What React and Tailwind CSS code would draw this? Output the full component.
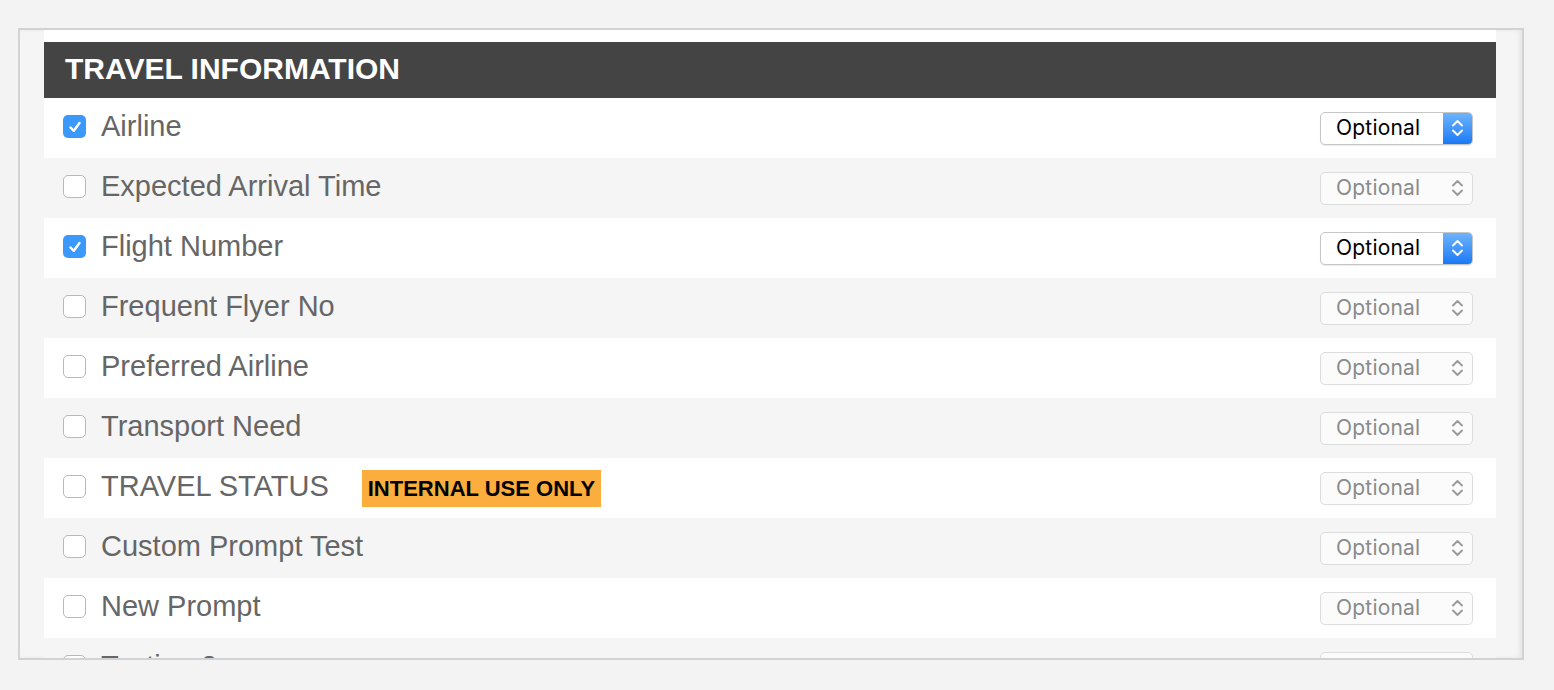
import React from "react";

const rows = [
  { label: "Airline", checked: true },
  { label: "Expected Arrival Time", checked: false },
  { label: "Flight Number", checked: true },
  { label: "Frequent Flyer No", checked: false },
  { label: "Preferred Airline", checked: false },
  { label: "Transport Need", checked: false },
  { label: "TRAVEL STATUS", checked: false, badge: "INTERNAL USE ONLY" },
  { label: "Custom Prompt Test", checked: false },
  { label: "New Prompt", checked: false },
  { label: "Testing 2", checked: false },
];

const Chevrons = ({ color }) => (
  <svg width="13" height="22" viewBox="0 0 13 22" fill="none" stroke={color} strokeWidth="1.9" strokeLinecap="round" strokeLinejoin="round">
    <path d="M2 8.5 L6.5 4 L11 8.5" />
    <path d="M2 13.5 L6.5 18 L11 13.5" />
  </svg>
);

const Checkbox = ({ checked }) =>
  checked ? (
    <div className="w-[23px] h-[23px] rounded-[5px] bg-[#3b99fc] flex items-center justify-center shrink-0">
      <svg width="16" height="16" viewBox="0 0 16 16" fill="none" stroke="white" strokeWidth="2.4" strokeLinecap="round" strokeLinejoin="round">
        <path d="M3.5 8.5 L6.8 11.8 L12.5 4" />
      </svg>
    </div>
  ) : (
    <div className="w-[23px] h-[23px] rounded-[5px] bg-white border border-[#b9b9b9] shrink-0" />
  );

const Select = ({ active }) =>
  active ? (
    <div className="w-[153px] h-[33px] rounded-[5px] border border-[#c6c6c6] bg-white flex items-stretch overflow-hidden shadow-[0_1px_1px_rgba(0,0,0,0.08)]">
      <span className="flex-1 pl-[15px] flex items-center text-[21px] tracking-[0.2px] text-black font-['Inter',sans-serif]">Optional</span>
      <span className="w-[29px] bg-gradient-to-b from-[#6cb3fb] to-[#1679f6] flex items-center justify-center">
        <Chevrons color="white" />
      </span>
    </div>
  ) : (
    <div className="w-[153px] h-[33px] rounded-[5px] border border-[#dcdcdc] bg-[#fbfbfb] flex items-center justify-between pl-[15px] pr-[8px]">
      <span className="text-[21px] tracking-[0.2px] text-[#8a8a8a] font-['Inter',sans-serif]">Optional</span>
      <Chevrons color="#9a9a9a" />
    </div>
  );

export default function App() {
  return (
    <div className="w-[1554px] h-[690px] bg-[#f3f3f3] pt-[28px] pl-[18px] font-['Liberation_Sans',Arial,sans-serif]">
      <div className="w-[1506px] h-[632px] border-2 border-[#d2d2d2] bg-[#f5f5f5] pl-[24px] pr-[26px] overflow-hidden shadow-[inset_-3px_0_4px_rgba(0,0,0,0.06)]">
        <div className="h-[12px] bg-white" />
        <div className="h-[56px] bg-[#444444] flex items-center pl-[21px] pb-[3px]">
          <h1 className="text-white font-bold text-[30px]">TRAVEL INFORMATION</h1>
        </div>
        {rows.map((r, i) => (
          <div
            key={r.label}
            className={`h-[60px] flex items-center pl-[19px] pr-[23px] ${i % 2 === 0 ? "bg-white" : "bg-[#f5f5f5]"}`}
          >
            <div className="flex items-center flex-1 -mt-[3px]">
              <Checkbox checked={r.checked} />
              <span className="ml-[15px] text-[29px] text-[#666666] leading-none">{r.label}</span>
              {r.badge && (
                <span className="ml-[33px] h-[37px] px-[6px] mt-[3px] bg-[#fbad3e] flex items-center text-[22px] font-bold text-black">
                  {r.badge}
                </span>
              )}
            </div>
            <Select active={r.checked} />
          </div>
        ))}
      </div>
    </div>
  );
}
